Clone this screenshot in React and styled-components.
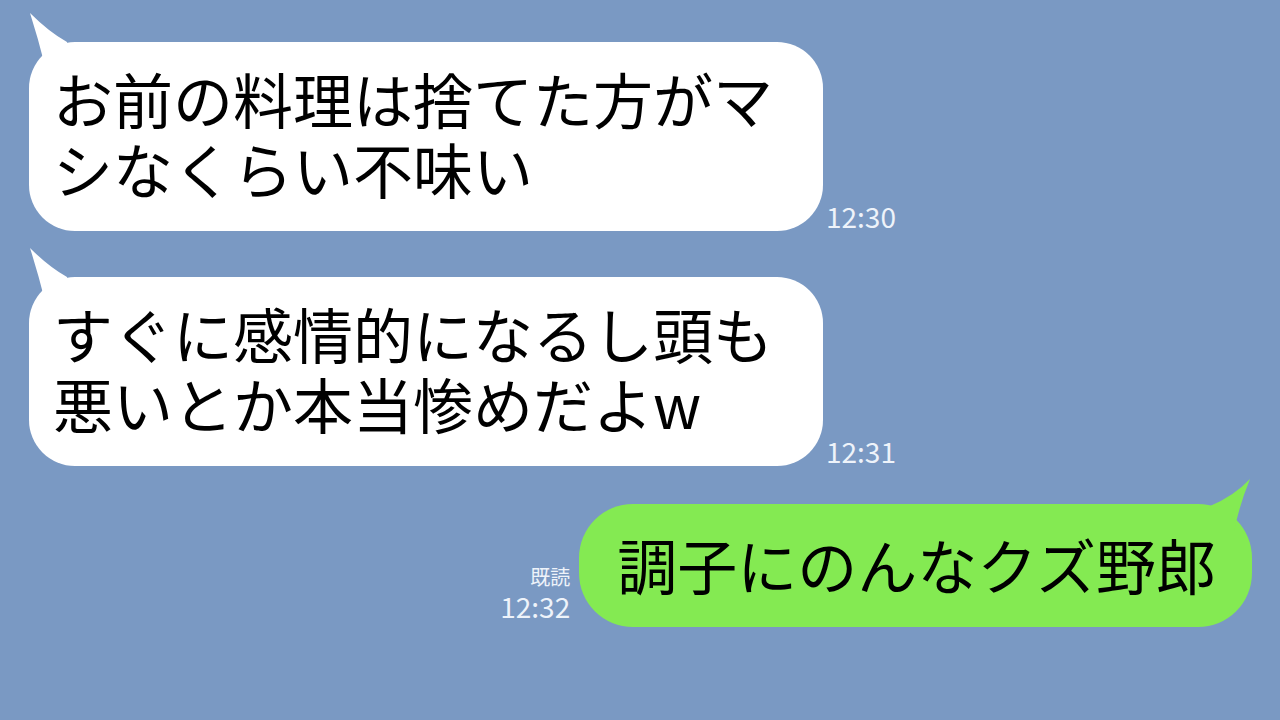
import React from "react";
import styled, { createGlobalStyle } from "styled-components";

const GlobalStyle = createGlobalStyle`
  html, body {
    margin: 0;
    padding: 0;
    background: #7a99c3;
  }
  body {
    width: 1280px;
    height: 720px;
    overflow: hidden;
    font-family: "Noto Sans CJK JP", "Noto Sans", sans-serif;
  }
`;

const Screen = styled.div`
  width: 1280px;
  height: 720px;
  background: #7a99c3;
  display: flex;
  flex-direction: column;
  padding-top: 42px;
  box-sizing: border-box;
`;

const Row = styled.div`
  display: flex;
  align-items: flex-end;
  justify-content: ${props => (props.mine ? "flex-end" : "flex-start")};
  padding: ${props => (props.mine ? "0 28px 0 0" : "0 0 0 29px")};
  margin-bottom: ${props => props.gap || 0}px;
`;

const Bubble = styled.div`
  position: relative;
  box-sizing: border-box;
  width: ${props => (props.width ? `${props.width}px` : "auto")};
  padding: ${props => (props.mine ? "25px 36px 28px 38px" : "21px 20px 28px 24px")};
  border-radius: ${props => (props.mine ? 54 : 46)}px;
  background: ${props => (props.mine ? "#84ea52" : "#ffffff")};
  color: #000;
  font-size: 60px;
  line-height: 70px;
  font-weight: 400;
  white-space: nowrap;
`;

const Line = styled.div`
  height: 70px;
`;

const Tail = styled.svg`
  position: absolute;
  top: -32px;
  ${props => (props.mine ? "right: 0;" : "left: 0;")}
  width: 50px;
  height: 60px;
  overflow: visible;
`;

const Meta = styled.div`
  display: flex;
  flex-direction: column;
  align-items: ${props => (props.mine ? "flex-end" : "flex-start")};
  margin: ${props => (props.mine ? "0 9px 7px 0" : "0 0 1px 3px")};
  color: #eef3fa;
`;

const ReadMark = styled.span`
  font-size: 20px;
  line-height: 30px;
`;

const Time = styled.span`
  font-size: 28px;
  line-height: 28px;
`;

const LeftTail = () => (
  <Tail viewBox="0 0 50 60">
    <path d="M1 3 Q 20 22 38 32 L 40 56 L 16 56 Q 9 28 1 3 Z" fill="#ffffff" />
  </Tail>
);

const RightTail = () => (
  <Tail mine viewBox="0 0 50 60">
    <path d="M48 7 Q 32 24 8 34 L 8 60 L 32 60 Q 37 34 48 7 Z" fill="#84ea52" />
  </Tail>
);

const messages = [
  { id: 1, lines: ["お前の料理は捨てた方がマ", "シなくらい不味い"], time: "12:30", gap: 46 },
  { id: 2, lines: ["すぐに感情的になるし頭も", "悪いとか本当惨めだよw"], time: "12:31", gap: 38 },
];

export default function App() {
  return (
    <>
      <GlobalStyle />
      <Screen>
        {messages.map(m => (
          <Row key={m.id} gap={m.gap}>
            <Bubble width={794}>
              <LeftTail />
              {m.lines.map((l, i) => (
                <Line key={i}>{l}</Line>
              ))}
            </Bubble>
            <Meta>
              <Time>{m.time}</Time>
            </Meta>
          </Row>
        ))}
        <Row mine>
          <Meta mine>
            <ReadMark>既読</ReadMark>
            <Time>12:32</Time>
          </Meta>
          <Bubble mine>
            <RightTail />
            <Line>調子にのんなクズ野郎</Line>
          </Bubble>
        </Row>
      </Screen>
    </>
  );
}
